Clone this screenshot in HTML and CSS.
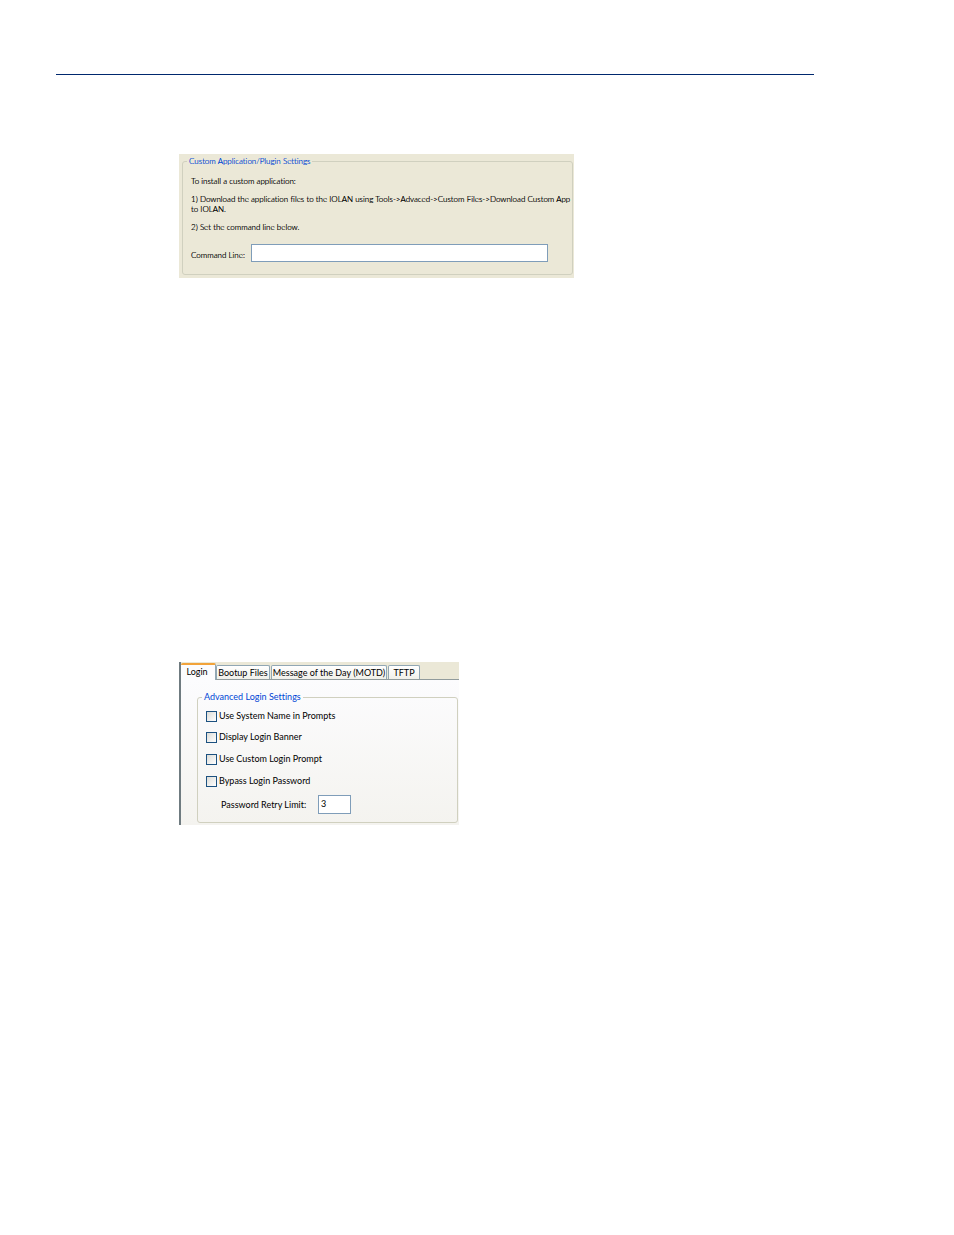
FILE: index.html
```html
<!DOCTYPE html>
<html lang="en">
<head>
  <meta charset="utf-8">
  <title>Custom Applications and Login Settings</title>
  <link rel="stylesheet" href="styles.css">
</head>
<body>
  <div class="page">
    <hr class="rule">
    <div class="panel plugin">
      <fieldset>
        <legend>Custom Application/Plugin Settings</legend>
        <p>To install a custom application:</p>
        <p>1) Download the application files to the IOLAN using Tools-&gt;Advaced-&gt;Custom Files-&gt;Download Custom App<br>to IOLAN.</p>
        <p>2) Set the command line below.</p>
        <div class="command">
          <label for="cmd">Command Line:</label>
          <input type="text" id="cmd">
        </div>
      </fieldset>
    </div>
    <div class="panel advanced">
      <div class="tabs">
        <button class="tab active">Login</button>
        <button class="tab">Bootup Files</button>
        <button class="tab tab-wide">Message of the Day (MOTD)</button>
        <button class="tab tab-short">TFTP</button>
      </div>
      <div class="tab-body">
        <fieldset>
          <legend>Advanced Login Settings</legend>
          <div class="options">
            <label><input type="checkbox">Use System Name in Prompts</label>
            <label><input type="checkbox">Display Login Banner</label>
            <label><input type="checkbox">Use Custom Login Prompt</label>
            <label><input type="checkbox">Bypass Login Password</label>
            <div class="retry">
              <label for="retry">Password Retry Limit:</label>
              <input type="text" id="retry" value="3">
            </div>
          </div>
        </fieldset>
      </div>
    </div>
  </div>
</body>
</html>
```

FILE: styles.css
```css
* {
  box-sizing: border-box;
}
body {
  margin: 0;
  background: #fff;
  font-family: Lato, Arial, sans-serif;
  font-size: 9px;
  line-height: 10px;
  font-variant-ligatures: none;
  color: #000;
}
.page {
  padding: 74px 140px 60px 56px;
}
.rule {
  height: 1px;
  margin: 0;
  border: 0;
  background: #00286e;
}
.panel {
  margin-left: 123px;
  white-space: nowrap;
}
input,
button {
  font: inherit;
  color: inherit;
}
fieldset {
  margin: 0;
  min-width: 0;
  border: 1px solid #d0d0bf;
  border-radius: 3px;
}
legend {
  margin-left: -4px;
  padding: 0 2px;
  line-height: 12px;
  color: #0046d5;
}
input[type="text"] {
  border: 1px solid #7f9db9;
  background: #fff;
  padding: 0 2px;
}

/* custom application settings */
.plugin {
  max-width: 395px;
  margin-top: 79px;
  padding: 1px 1px 3px 3px;
  background: #ebe8d7;
  font-size: 8px;
  font-weight: 300;
  text-shadow: 0 0 currentColor;
}
.plugin fieldset {
  padding: 9px 6px 12px 8px;
}
.plugin p {
  margin: 0 0 8px;
}
.command {
  display: flex;
  align-items: center;
  margin-top: 12px;
  padding-right: 18px;
}
.command label {
  width: 60px;
  padding-top: 4px;
}
.command input {
  flex: 1;
  height: 18px;
}

/* login tab */
.advanced {
  max-width: 280px;
  margin-top: 384px;
  border-left: 2px solid #6f7b80;
  background: #ebe8d7;
}
.tabs {
  display: flex;
  align-items: flex-end;
  height: 18px;
  border-bottom: 1px solid #919b9c;
}
.tab {
  width: 54px;
  height: 14px;
  margin-right: 1px;
  padding: 0;
  border: 1px solid #91a7b4;
  border-bottom: 0;
  border-radius: 2px 2px 0 0;
  background: linear-gradient(#fff, #f0f0ea);
}
.tab.active {
  width: 35px;
  height: 17px;
  margin: 0 0 -1px;
  padding: 0 2px 2px 0;
  border-left: 0;
  border-top: 2px solid #f2a33a;
  background: #fcfcfe;
}
.tab-wide {
  width: 116px;
}
.tab-short {
  width: 32px;
}
.tab-body {
  padding: 11px 1px 2px 16px;
  background: linear-gradient(#fcfcfe, #f4f3ef);
}
.tab-body fieldset {
  padding: 3px 8px 5px;
}
.options {
  display: grid;
  grid-template-rows: 20px 22px 22px 22px 25px;
  align-items: center;
}
.options > label {
  display: flex;
  align-items: center;
  gap: 2px;
}
.options input[type="checkbox"] {
  appearance: none;
  width: 11px;
  height: 11px;
  margin: 0;
  border: 1px solid #1c5180;
  background: linear-gradient(135deg, #dcdcd7, #fff);
}
.options input[type="checkbox"]:checked {
  background: #21a121;
}
.retry {
  display: flex;
  align-items: center;
  padding-left: 15px;
}
.retry label {
  width: 97px;
}
.retry input {
  width: 33px;
  height: 19px;
  padding-bottom: 2px;
}
```
